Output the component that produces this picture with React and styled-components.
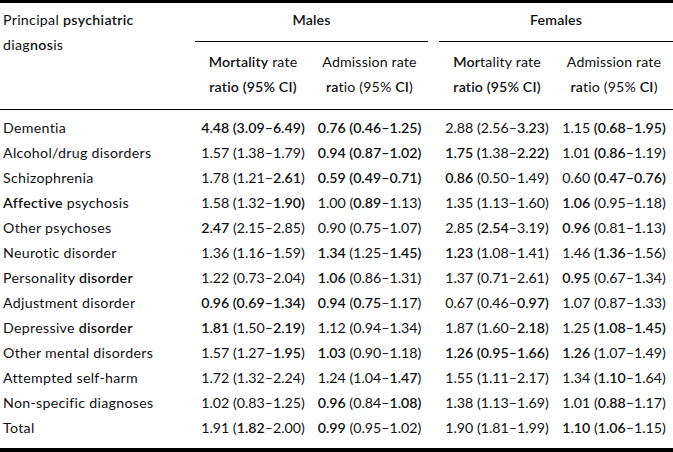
import React from "react";
import styled, { createGlobalStyle } from "styled-components";

const Global = createGlobalStyle`
  html, body { margin: 0; padding: 0; background: #fff; }
  body { font-family: "Lato", "Open Sans", sans-serif; color: #111; }
`;

const Wrap = styled.div`
  width: 673px;
  border-top: 3px solid #000;
  border-bottom: 4px solid #000;
`;

const Table = styled.table`
  width: 673px;
  border-collapse: collapse;
  table-layout: fixed;
  font-size: 14.2px;
  line-height: 25px;
`;

const HeadCell = styled.th`
  font-weight: 400;
  padding: ${(p) => (p.$top ? "4px 0 9px" : "7px 0 10px")};
  text-align: ${(p) => (p.$left ? "left" : "center")};
  vertical-align: top;
  padding-left: ${(p) => (p.$left ? "3px" : "0")};
  letter-spacing: ${(p) => (p.$left ? "0.3px" : "0.15px")};
  border-bottom: ${(p) => (p.$rule ? "1px solid #000" : "none")};
  white-space: nowrap;
`;

const LabelCell = styled.td`
  padding: ${(p) => (p.$first ? "5px" : "0")} 0 ${(p) => (p.$last ? "8px" : "0")} 3px;
  text-align: left;
  letter-spacing: 0.3px;
  white-space: nowrap;
`;

const ValueCell = styled.td`
  padding: ${(p) => (p.$first ? "5px" : "0")} 0 ${(p) => (p.$last ? "8px" : "0")} 0;
  text-align: center;
  white-space: nowrap;
`;

const B = styled.span`
  font-weight: 600;
`;

const Line = styled.div`
  display: block;
`;

function Rich({ text }) {
  const parts = text.split("*");
  return (
    <>
      {parts.map((p, i) => (i % 2 ? <B key={i}>{p}</B> : <React.Fragment key={i}>{p}</React.Fragment>))}
    </>
  );
}

const rows = [
  ["Dementia", "*4.48 (3.09–6.49)*", "*0.76 (0.46–1.25)*", "2.88 (2.56–*3.23*)", "1.15 *(0.68–1.95)*"],
  ["Alcohol/drug disorders", "1.57 (1.38–1.79)", "*0.94 (0.87–1.02)*", "*1.75 (*1.38–*2.22)*", "1.01 *(0.86–*1.19)"],
  ["Schizophrenia", "1.78 (1.21–*2.61*)", "*0.59 (0.49–0.71)*", "*0.86* (0.50–1.49)", "0.60 *(0.47–0.76)*"],
  ["*Affective* psychosis", "1.58 (1.32–*1.90)*", "1.00 (*0.89*–1.13)", "1.35 (1.13–1.60)", "*1.06* (0.95–1.18)"],
  ["Other psychoses", "*2.47* (2.15–2.85)", "0.90 (0.75–1.07)", "2.85 (*2.54*–3.19)", "*0.96* (0.81–1.13)"],
  ["Neurotic disorder", "1.36 (1.16–1.59)", "*1.34* (1.25–*1.45)*", "*1.23* (1.08–1.41)", "1.46 (*1.36*–1.56)"],
  ["Personality *disorder*", "1.22 (0.73–2.04)", "*1.06* (0.86–1.31)", "1.37 (0.71–2.61)", "*0.95* (0.67–1.34)"],
  ["Adjustment disorder", "*0.96 (0.69–1.34)*", "*0.94* (*0.75*–1.17)", "0.67 (0.46–*0.97)*", "1.07 (0.87–1.33)"],
  ["Depressive *disorder*", "*1.81* (1.50–*2.19*)", "1.12 (0.94–1.34)", "1.87 (1.60–*2.18*)", "1.25 *(1.08–1.45)*"],
  ["Other mental disorders", "1.57 (1.27–*1.95*)", "*1.03* (0.90–1.18)", "*1.26 (0.95–1.66)*", "*1.26* (1.07–1.49)"],
  ["Attempted self-harm", "1.72 (1.32–2.24)", "1.24 (1.04–*1.47*)", "1.55 (1.11–2.17)", "1.34 (*1.10*–1.64)"],
  ["Non-specific diagnoses", "1.02 (0.83–1.25)", "*0.96* (0.84–*1.08)*", "1.38 (1.13–1.69)", "1.01 (*0.88*–1.17)"],
  ["Total", "1.91 (*1.82*–2.00)", "*0.99* (0.95–1.02)", "1.90 (1.81–1.99)", "*1.10* (*1.06*–1.15)"],
];

function SubHead({ a, b }) {
  return (
    <HeadCell $rule>
      <Line><Rich text={a} /></Line>
      <Line><Rich text={b} /></Line>
    </HeadCell>
  );
}

export default function App() {
  return (
    <>
      <Global />
      <Wrap>
        <Table>
          <colgroup>
            <col style={{ width: 195 }} />
            <col style={{ width: 116 }} />
            <col style={{ width: 117 }} />
            <col style={{ width: 11 }} />
            <col style={{ width: 116 }} />
            <col style={{ width: 118 }} />
          </colgroup>
          <thead>
            <tr>
              <HeadCell $top $left $rule rowSpan={2}>
                <Line><Rich text="Principal *psychiatric*" /></Line>
                <Line><Rich text="diag*nos*is" /></Line>
              </HeadCell>
              <HeadCell $top $rule colSpan={2}><B>Males</B></HeadCell>
              <HeadCell $top />
              <HeadCell $top $rule colSpan={2}><B>Females</B></HeadCell>
            </tr>
            <tr>
              <SubHead a="*Mortality* rate" b="*ratio (95% CI)*" />
              <SubHead a="Admission rate" b="*ra*tio (95% *CI*)" />
              <HeadCell $rule />
              <SubHead a="*Mor*tality rate" b="*ratio (95% CI)*" />
              <SubHead a="Admission rate" b="*ra*tio (95% *CI*)" />
            </tr>
          </thead>
          <tbody>
            {rows.map((r, i) => {
              const first = i === 0;
              const last = i === rows.length - 1;
              return (
                <tr key={i}>
                  <LabelCell $first={first} $last={last}><Rich text={r[0]} /></LabelCell>
                  <ValueCell $first={first} $last={last}><Rich text={r[1]} /></ValueCell>
                  <ValueCell $first={first} $last={last}><Rich text={r[2]} /></ValueCell>
                  <ValueCell $first={first} $last={last} />
                  <ValueCell $first={first} $last={last}><Rich text={r[3]} /></ValueCell>
                  <ValueCell $first={first} $last={last}><Rich text={r[4]} /></ValueCell>
                </tr>
              );
            })}
          </tbody>
        </Table>
      </Wrap>
    </>
  );
}
